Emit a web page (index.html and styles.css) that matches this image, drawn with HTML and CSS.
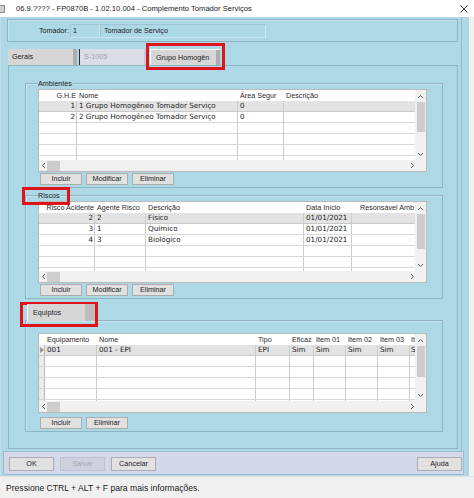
FILE: index.html
```html
<!DOCTYPE html>
<html lang="pt">
<head>
<meta charset="utf-8">
<title>Complemento Tomador Serviços</title>
<link rel="stylesheet" href="styles.css">
</head>
<body>
<div class="window">
  <div class="titlebar">
    <span class="app-icon"></span>
    <span class="title">06.9.???? - FP0870B - 1.02.10.004 - Complemento Tomador Serviços</span>
    <svg class="close" viewBox="0 0 9 9"><path d="M0.5 0.5L8.5 8.5M8.5 0.5L0.5 8.5"/></svg>
  </div>

  <div class="client">
    <div class="main">
      <div class="tomador">
        <span class="field-label">Tomador:</span>
        <span class="input input-code">1</span>
        <span class="input input-name">Tomador de Serviço</span>
      </div>

      <div class="tabs">
        <div class="tab">Gerais</div>
        <div class="tab tab-disabled">S-1005</div>
        <div class="tab tab-active">Grupo Homogên</div>
      </div>

      <div class="tab-panel">
        <!-- Ambientes -->
        <div class="group group-amb">
          <span class="group-label">Ambientes</span>
          <div class="grid grid-amb">
            <div class="grid-main">
              <div class="table">
                <div class="row head cols-amb"><span class="c r">G.H.E</span><span class="c">Nome</span><span class="c">Área Segur</span><span class="c">Descrição</span></div>
                <div class="row sel cols-amb"><span class="c r">1</span><span class="c">1 Grupo Homogêneo Tomador Serviço</span><span class="c">0</span><span class="c"></span></div>
                <div class="row cols-amb"><span class="c r">2</span><span class="c">2 Grupo Homogêneo Tomador Serviço</span><span class="c">0</span><span class="c"></span></div>
                <div class="row cols-amb"><span class="c"></span><span class="c"></span><span class="c"></span><span class="c"></span></div>
                <div class="row cols-amb"><span class="c"></span><span class="c"></span><span class="c"></span><span class="c"></span></div>
                <div class="row cols-amb"><span class="c"></span><span class="c"></span><span class="c"></span><span class="c"></span></div>
                <div class="row cols-amb"><span class="c"></span><span class="c"></span><span class="c"></span><span class="c"></span></div>
              </div>
              <div class="vscroll">
                <svg class="varr" viewBox="0 0 7 5"><path d="M1 4L3.5 1.5L6 4"/></svg>
                <span class="vthumb thumb-amb"></span>
                <span class="spacer"></span>
                <svg class="varr" viewBox="0 0 7 5"><path d="M1 1L3.5 3.5L6 1"/></svg>
              </div>
            </div>
            <div class="hscroll">
              <svg class="harr" viewBox="0 0 5 7"><path d="M4 1L1.5 3.5L4 6"/></svg>
              <span class="hthumb"></span>
              <span class="spacer"></span>
              <svg class="harr harr-r" viewBox="0 0 5 7"><path d="M1 1L3.5 3.5L1 6"/></svg>
            </div>
          </div>
          <div class="btns">
            <button class="btn">Incluir</button>
            <button class="btn">Modificar</button>
            <button class="btn">Eliminar</button>
          </div>
        </div>

        <!-- Riscos -->
        <div class="group group-riscos">
          <span class="group-label">Riscos</span>
          <div class="grid grid-riscos">
            <div class="grid-main">
              <div class="table">
                <div class="row head cols-riscos"><span class="c r">Risco Acidente</span><span class="c">Agente Risco</span><span class="c">Descrição</span><span class="c">Data Início</span><span class="c r">Resonsável Amb</span></div>
                <div class="row sel cols-riscos"><span class="c r">2</span><span class="c">2</span><span class="c">Físico</span><span class="c">01/01/2021</span><span class="c"></span></div>
                <div class="row cols-riscos"><span class="c r">3</span><span class="c">1</span><span class="c">Químico</span><span class="c">01/01/2021</span><span class="c"></span></div>
                <div class="row cols-riscos"><span class="c r">4</span><span class="c">3</span><span class="c">Biológico</span><span class="c">01/01/2021</span><span class="c"></span></div>
                <div class="row cols-riscos"><span class="c"></span><span class="c"></span><span class="c"></span><span class="c"></span><span class="c"></span></div>
                <div class="row cols-riscos"><span class="c"></span><span class="c"></span><span class="c"></span><span class="c"></span><span class="c"></span></div>
                <div class="row cols-riscos"><span class="c"></span><span class="c"></span><span class="c"></span><span class="c"></span><span class="c"></span></div>
              </div>
              <div class="vscroll">
                <svg class="varr" viewBox="0 0 7 5"><path d="M1 4L3.5 1.5L6 4"/></svg>
                <span class="vthumb thumb-riscos"></span>
                <span class="spacer"></span>
                <svg class="varr" viewBox="0 0 7 5"><path d="M1 1L3.5 3.5L6 1"/></svg>
              </div>
            </div>
            <div class="hscroll">
              <svg class="harr" viewBox="0 0 5 7"><path d="M4 1L1.5 3.5L4 6"/></svg>
              <span class="hthumb"></span>
              <span class="spacer"></span>
              <svg class="harr harr-r" viewBox="0 0 5 7"><path d="M1 1L3.5 3.5L1 6"/></svg>
            </div>
          </div>
          <div class="btns">
            <button class="btn">Incluir</button>
            <button class="btn">Modificar</button>
            <button class="btn">Eliminar</button>
          </div>
        </div>

        <!-- Equiptos -->
        <div class="sub-tab">Equiptos</div>
        <div class="equip-panel">
          <div class="grid grid-equip">
            <div class="grid-main">
              <div class="table">
                <div class="row head cols-equip"><span class="c ind-head"></span><span class="c">Equipamento</span><span class="c">Nome</span><span class="c">Tipo</span><span class="c">Eficaz</span><span class="c">Item 01</span><span class="c">Item 02</span><span class="c">Item 03</span><span class="c last">It</span></div>
                <div class="row sel cols-equip"><span class="c ind"><svg class="ind-arrow" viewBox="0 0 4 6"><path d="M0.5 0.5L3.5 3L0.5 5.5Z"/></svg></span><span class="c">001</span><span class="c">001 - EPI</span><span class="c">EPI</span><span class="c">Sim</span><span class="c">Sim</span><span class="c">Sim</span><span class="c">Sim</span><span class="c last">S</span></div>
                <div class="row cols-equip"><span class="c ind"></span><span class="c"></span><span class="c"></span><span class="c"></span><span class="c"></span><span class="c"></span><span class="c"></span><span class="c"></span><span class="c"></span></div>
                <div class="row cols-equip"><span class="c ind"></span><span class="c"></span><span class="c"></span><span class="c"></span><span class="c"></span><span class="c"></span><span class="c"></span><span class="c"></span><span class="c"></span></div>
                <div class="row cols-equip"><span class="c ind"></span><span class="c"></span><span class="c"></span><span class="c"></span><span class="c"></span><span class="c"></span><span class="c"></span><span class="c"></span><span class="c"></span></div>
                <div class="row cols-equip"><span class="c ind"></span><span class="c"></span><span class="c"></span><span class="c"></span><span class="c"></span><span class="c"></span><span class="c"></span><span class="c"></span><span class="c"></span></div>
                <div class="row cols-equip"><span class="c ind"></span><span class="c"></span><span class="c"></span><span class="c"></span><span class="c"></span><span class="c"></span><span class="c"></span><span class="c"></span><span class="c"></span></div>
              </div>
              <div class="vscroll">
                <svg class="varr" viewBox="0 0 7 5"><path d="M1 4L3.5 1.5L6 4"/></svg>
                <span class="vthumb thumb-equip"></span>
                <span class="spacer"></span>
                <svg class="varr" viewBox="0 0 7 5"><path d="M1 1L3.5 3.5L6 1"/></svg>
              </div>
            </div>
            <div class="hscroll">
              <svg class="harr" viewBox="0 0 5 7"><path d="M4 1L1.5 3.5L4 6"/></svg>
              <span class="hthumb"></span>
              <span class="spacer"></span>
              <svg class="harr harr-r" viewBox="0 0 5 7"><path d="M1 1L3.5 3.5L1 6"/></svg>
            </div>
          </div>
          <div class="btns btns-equip">
            <button class="btn">Incluir</button>
            <button class="btn">Eliminar</button>
          </div>
        </div>
      </div>
    </div>

    <div class="bottom-bar">
      <button class="btn btn-lg">OK</button>
      <button class="btn btn-lg btn-disabled">Salvar</button>
      <button class="btn btn-lg">Cancelar</button>
      <button class="btn btn-lg btn-help">Ajuda</button>
    </div>
  </div>

  <div class="statusbar">Pressione CTRL + ALT + F para mais informações.</div>

  <div class="mark mark-tab"></div>
  <div class="mark mark-riscos"></div>
  <div class="mark mark-equip"></div>
</div>
</body>
</html>
```

FILE: styles.css
```css
* { box-sizing: border-box; }

html, body { margin: 0; padding: 0; }

body {
  width: 474px;
  height: 498px;
  overflow: hidden;
  background: #f0f0f0;
  font-family: "Liberation Sans", Arial, sans-serif;
  font-size: 7.2px;
  color: #1c1c1c;
}

.window {
  position: relative;
  width: 474px;
  height: 498px;
  display: flex;
  flex-direction: column;
}

/* ---------- title bar ---------- */
.titlebar {
  flex: none;
  height: 17px;
  background: #ffffff;
  display: flex;
  align-items: center;
}
.app-icon {
  width: 5px;
  height: 8px;
  background: #cfcfcf;
  border: 1px solid #8c8c8c;
  border-left: none;
}
.title {
  margin-left: 11px;
  font-size: 7.6px;
  color: #222;
  white-space: nowrap;
}
.close {
  width: 8px;
  height: 8px;
  margin-left: auto;
  margin-right: 6px;
}
.close path { stroke: #333; stroke-width: 1; fill: none; }

/* ---------- client area ---------- */
.client {
  flex: none;
  width: 469px;
  height: 459px;
  background: #add8e6;
  border-left: 1px solid #c4dde6;
  display: flex;
  flex-direction: column;
}
.main {
  flex: none;
  width: 461px;
  height: 434px;
  padding-top: 2px;
  border-right: 1px solid #93bccb;
  display: flex;
  flex-direction: column;
}

.tomador {
  flex: none;
  margin-left: 6px;
  width: 451px;
  height: 23px;
  border: 1px solid #8db3c2;
  box-shadow: inset 1px 1px 0 #c6e4ee;
  display: flex;
  align-items: center;
}
.field-label { margin-left: 31px; width: 31px; }
.input {
  height: 14px;
  line-height: 12px;
  border: 1px solid #c9e6ef;
  border-top-color: #9ec4d2;
  border-left-color: #9ec4d2;
  padding-left: 2px;
  white-space: nowrap;
}
.input-code { width: 30px; }
.input-name { width: 166px; padding-left: 3px; }

/* ---------- tabs ---------- */
.tabs {
  flex: none;
  margin-top: 7px;
  margin-left: 7px;
  height: 16px;
  display: flex;
}
.tab {
  width: 69px;
  height: 16px;
  line-height: 16px;
  padding-left: 4px;
  background: #d6d6d6;
  box-shadow: inset -4px 0 0 #adadad;
  white-space: nowrap;
}
.tab-disabled {
  margin-left: 2px;
  width: 68px;
  border-left: 1px solid #2d2d2d;
  background: #dcdde6;
  box-shadow: inset -3px 0 0 #c8c9d4;
  color: #a3a3a8;
}
.tab-active {
  margin-left: 3px;
  width: 70px;
  border-left: 1px solid #ffffff;
  border-top: 1px solid #ffffff;
  line-height: 15px;
  padding-left: 5px;
}

.tab-panel {
  flex: none;
  margin-left: 7px;
  width: 450px;
  height: 384px;
  border: 1px solid #8fb5c4;
  display: flex;
  flex-direction: column;
}

/* ---------- group boxes ---------- */
.group {
  flex: none;
  margin-left: 16px;
  width: 418px;
  border: 1px solid #8fb5c4;
  box-shadow: inset 1px 1px 0 #c6e4ee;
  padding: 0 15px 2px 12px;
  display: flex;
  flex-direction: column;
}
.group-amb { margin-top: 17px; }
.group-riscos { margin-top: 7px; }
.group-label {
  align-self: flex-start;
  margin-top: -4px;
  margin-bottom: 1px;
  padding: 0 1px 0 0;
  height: 8px;
  line-height: 8px;
  background: #add8e6;
  white-space: nowrap;
}

.sub-tab {
  flex: none;
  margin-top: 5px;
  margin-left: 18px;
  width: 68px;
  height: 17px;
  line-height: 17px;
  padding-left: 5px;
  background: #d6d6d6;
  border-left: 1px solid #ffffff;
  box-shadow: inset -10px 0 0 #bcbcbc;
  position: relative;
  z-index: 1;
}
.equip-panel {
  flex: none;
  margin-top: -1px;
  margin-left: 16px;
  width: 418px;
  border: 1px solid #8fb5c4;
  box-shadow: inset 1px 1px 0 #c6e4ee;
  padding: 12px 15px 2px 12px;
  display: flex;
  flex-direction: column;
}

/* ---------- data grids ---------- */
.grid {
  flex: none;
  width: 389px;
  background: #ffffff;
  border: 1px solid #b9b9b9;
  display: flex;
  flex-direction: column;
}
.grid-amb { height: 83px; }
.grid-riscos { height: 82px; }
.grid-equip { height: 80px; }

.grid-main {
  flex: 1;
  min-height: 0;
  display: flex;
}
.table {
  flex: 1;
  min-width: 0;
  overflow: hidden;
}
.row {
  display: grid;
  height: 11px;
  line-height: 10px;
  border-bottom: 1px solid #d7d7d7;
  font-family: "DejaVu Sans", Verdana, sans-serif;
  font-size: 7.2px;
  color: #222;
}
.row.head {
  border-bottom: none;
  line-height: 11px;
  font-family: "Liberation Sans", Arial, sans-serif;
  font-size: 7.2px;
  color: #2a2a2a;
}
.row.sel { background: #e3e3e3; border-bottom-color: #c9c9c9; }

.c {
  padding: 0 1px 0 2px;
  border-right: 1px solid #cccccc;
  white-space: nowrap;
  overflow: hidden;
}
.row.head .c { border-right: none; }
.c.r { text-align: right; padding-right: 1px; }
.c.last { padding: 0 0 0 1px; overflow: visible; }

.cols-amb { grid-template-columns: 38px 161px 46px 1fr; }
.cols-riscos { grid-template-columns: 56px 51px 158px 48px 1fr; }
.cols-equip { grid-template-columns: 6px 52px 159px 34px 24px 32px 32px 32px 1fr; }
.cols-riscos .c:last-child,
.cols-amb .c:last-child,
.cols-equip .c:last-child { border-right: none; }

.ind {
  padding: 0;
  background: #ececec;
  border-right: 1px solid #b8b8b8;
  display: flex;
  align-items: center;
  justify-content: center;
}
.ind-arrow { width: 4px; height: 6px; }
.ind-arrow path { fill: #8a8a8a; stroke: #8a8a8a; stroke-width: 0.5; }

.vscroll {
  flex: none;
  width: 11px;
  background: #f0f0f0;
  display: flex;
  flex-direction: column;
  align-items: center;
  padding: 4px 0 3px;
}
.varr { width: 7px; height: 5px; flex: none; }
.varr path, .harr path { stroke: #5a5a5a; stroke-width: 1; fill: none; }
.vthumb { flex: none; width: 8px; background: #cdcdcd; margin-top: 3px; }
.thumb-amb { height: 30px; }
.thumb-riscos { height: 35px; }
.thumb-equip { height: 31px; }
.spacer { flex: 1; }

.hscroll {
  flex: none;
  height: 11px;
  background: #f0f0f0;
  display: flex;
  align-items: center;
  padding-left: 2px;
}
.harr { width: 5px; height: 7px; flex: none; }
.harr-r { margin-right: 11px; }
.hthumb { flex: none; width: 13px; height: 10px; background: #cdcdcd; margin-left: 1px; }

/* ---------- buttons ---------- */
.btns {
  flex: none;
  display: flex;
  gap: 4px;
  margin-top: 1px;
  padding-left: 2px;
}
.btns-equip { margin-top: 4px; }
.btn {
  width: 42px;
  height: 12px;
  padding: 0;
  margin: 0;
  background: #e1e1e1;
  border: 1px solid #adadad;
  font-family: "Liberation Sans", Arial, sans-serif;
  font-size: 7.2px;
  line-height: 10px;
  color: #1c1c1c;
  text-align: center;
}

.bottom-bar {
  flex: none;
  margin-left: 2px;
  margin-bottom: 1px;
  width: 461px;
  height: 24px;
  background: #d3d8eb;
  border: 1px solid #9fbccb;
  padding: 5px 1px 0 5px;
  display: flex;
  align-items: flex-start;
  gap: 6px;
}
.btn-lg {
  width: 45px;
  height: 14px;
  line-height: 12px;
}
.btn-disabled {
  background: #cfd2de;
  border-color: #bfc3d0;
  color: #a3a6b0;
}
.btn-help { margin-left: auto; }

/* ---------- status bar ---------- */
.statusbar {
  flex: none;
  height: 22px;
  line-height: 22px;
  padding-left: 6px;
  background: #f0f0f0;
  border-top: 1px solid #e2e2e2;
  font-size: 8.6px;
  color: #202020;
  white-space: nowrap;
}

/* ---------- red annotation boxes over the screenshot ---------- */
.mark {
  position: absolute;
  border: 3px solid #e0131d;
  pointer-events: none;
}
.mark-tab { left: 146px; top: 43px; width: 79px; height: 27px; }
.mark-riscos { left: 22px; top: 187px; width: 48px; height: 18px; }
.mark-equip { left: 20px; top: 302px; width: 78px; height: 25px; }
```
